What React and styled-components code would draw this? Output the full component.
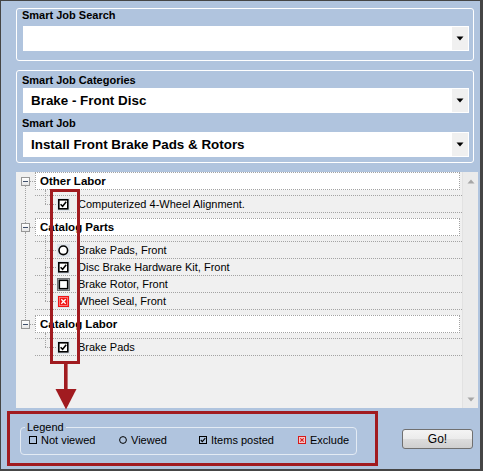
import React from 'react';
import styled, { createGlobalStyle } from 'styled-components';

const GlobalStyle = createGlobalStyle`
  html, body { margin: 0; padding: 0; background: #b0c4de; }
  body { font-family: "Liberation Sans", Arial, sans-serif; color: #000; }
  * { box-sizing: border-box; }
`;

const RED = '#a11b20';
const DOT = '#a3a3a3';

const Window = styled.div`
  position: relative;
  width: 483px;
  height: 471px;
  background: #b0c4de;
  border-style: solid;
  border-color: #454545;
  border-width: 1px 3px 2px 1px;
  padding: 7px 0 0 15px;
  display: flex;
  flex-direction: column;
`;

const GroupBox = styled.div`
  width: 458px;
  border: 1px solid #ffffff;
  border-radius: 3px;
  padding: ${p => p.$pad};
  margin-bottom: 9px;
  display: flex;
  flex-direction: column;
`;

const GroupLabel = styled.div`
  font-size: 11px;
  line-height: 13px;
  font-weight: bold;
  margin-top: ${p => p.$mt || 0}px;
  margin-left: -1px;
  white-space: nowrap;
`;

const Combo = styled.div`
  height: 25px;
  background: #ffffff;
  margin-top: ${p => p.$mt || 0}px;
  padding: 1px;
  display: flex;
  align-items: stretch;
`;

const ComboValue = styled.div`
  flex: 1;
  display: flex;
  align-items: center;
  padding-left: 7px;
  font-size: 13.4px;
  font-weight: bold;
  white-space: nowrap;
`;

const DropButton = styled.div`
  width: 16px;
  background: #f0f0f0;
  display: flex;
  align-items: center;
  justify-content: center;
`;

const TreePanel = styled.div`
  width: 462px;
  height: 236px;
  background: #f0f0f0;
  display: flex;
`;

const TreeBody = styled.div`
  flex: 1;
  display: flex;
  flex-direction: column;
`;

const ScrollBar = styled.div`
  width: 16px;
  background: #ebebeb;
  border-left: 1px solid #e2e2e2;
  display: flex;
  flex-direction: column;
  justify-content: space-between;
  align-items: center;
  padding: 7px 0 6px;
`;

const Node = styled.div`
  position: relative;
  &::before {
    content: '';
    display: ${p => (p.$last ? 'none' : 'block')};
    position: absolute;
    left: 9px;
    top: 14px;
    bottom: -5px;
    border-left: 1px dotted ${DOT};
  }
`;

const HeaderRow = styled.div`
  height: 18px;
  display: flex;
`;

const ExpanderCell = styled.div`
  width: 19px;
  display: flex;
  align-items: center;
  padding-left: 5px;
  position: relative;
  &::after {
    content: '';
    position: absolute;
    left: 14px;
    right: 0;
    top: 9px;
    border-top: 1px dotted ${DOT};
  }
`;

const Expander = styled.div`
  width: 9px;
  height: 9px;
  border: 1px solid #969696;
  background: linear-gradient(#ffffff, #e6e6e6);
  display: flex;
  align-items: center;
  justify-content: center;
  &::before {
    content: '';
    width: 5px;
    height: 1px;
    background: #3f4f6b;
  }
`;

const HeaderBox = styled.div`
  flex: 1;
  margin-right: 2px;
  background: #ffffff;
  border: 1px dotted ${DOT};
  display: flex;
  align-items: center;
  padding-left: 4px;
  font-size: 11.5px;
  font-weight: bold;
  white-space: nowrap;
`;

const ChildList = styled.div`
  position: relative;
  margin: 5px 0 5px 19px;
  &::before {
    content: '';
    position: absolute;
    left: 10px;
    top: -5px;
    bottom: 9px;
    border-left: 1px dotted ${DOT};
  }
`;

const ChildRow = styled.div`
  position: relative;
  height: ${p => (p.$last ? 18 : 17)}px;
  border-top: 1px dotted ${DOT};
  border-bottom: ${p => (p.$last ? `1px dotted ${DOT}` : 'none')};
  display: flex;
  align-items: center;
  padding-left: 22px;
  &::after {
    content: '';
    position: absolute;
    left: 10px;
    width: 11px;
    top: 50%;
    border-top: 1px dotted ${DOT};
  }
`;

const ChildText = styled.span`
  margin-left: 8px;
  font-size: 11px;
  white-space: nowrap;
`;

const BottomBar = styled.div`
  width: 464px;
  height: 61px;
  display: flex;
  justify-content: space-between;
  align-items: flex-start;
  padding: 0 7px 0 4px;
`;

const LegendBox = styled.fieldset`
  width: 337px;
  height: 35px;
  margin: 12px 0 0 0;
  padding: 0 0 0 4px;
  border: 1px solid #e3ebf4;
  border-radius: 4px;
`;

const LegendTitle = styled.legend`
  padding: 0 2px;
  font-size: 11px;
  line-height: 14px;
`;

const LegendItems = styled.div`
  height: 20px;
  margin-top: -4px;
  margin-left: 4px;
  display: grid;
  grid-template-columns: 90px 80px 99px auto;
  align-items: center;
`;

const LegendItem = styled.div`
  display: flex;
  align-items: center;
  gap: 4px;
  font-size: 11px;
  white-space: nowrap;
`;

const GoButton = styled.button`
  margin-top: 21px;
  width: 71px;
  height: 20px;
  border: 1px solid #707070;
  border-radius: 3px;
  background: linear-gradient(#f4f4f4 0%, #ebebeb 50%, #dddddd 51%, #cfcfcf 100%);
  font-family: "Liberation Sans", Arial, sans-serif;
  font-size: 12px;
  color: #000;
  padding: 0;
`;

const Highlight = styled.div`
  position: absolute;
  left: ${p => p.$x}px;
  top: ${p => p.$y}px;
  width: ${p => p.$w}px;
  height: ${p => p.$h}px;
  border: 3px solid ${RED};
  pointer-events: none;
`;

const ArrowWrap = styled.svg`
  position: absolute;
  left: 54px;
  top: 362px;
`;

const DownArrow = () => (
  <svg width="8" height="5" viewBox="0 0 8 5">
    <path d="M0.5 0.5 H7.5 L4 4.5 Z" fill="#000" />
  </svg>
);

const ScrollArrow = ({ up }) => (
  <svg width="8" height="5" viewBox="0 0 8 5">
    <path d={up ? 'M0.5 4.5 H7.5 L4 0.5 Z' : 'M0.5 0.5 H7.5 L4 4.5 Z'} fill="#a6a6a6" />
  </svg>
);

const TreeIcon = ({ kind }) => (
  <svg width="13" height="13" viewBox="0 0 13 13">
    <rect x="0" y="0" width="13" height="13" fill="#dfe4ea" />
    {kind === 'check' && (
      <>
        <rect x="1.8" y="1.8" width="9" height="9" fill="#fff" stroke="#000" strokeWidth="1.6" />
        <path d="M3.6 6.2 L5.6 8.3 L9.2 3.8" stroke="#000" strokeWidth="1.5" fill="none" />
      </>
    )}
    {kind === 'circle' && (
      <circle cx="6.3" cy="6.3" r="4.3" fill="#fff" stroke="#000" strokeWidth="1.6" />
    )}
    {kind === 'empty' && (
      <>
        <rect x="0.5" y="0.5" width="12" height="12" fill="none" stroke="#000" strokeWidth="1" strokeDasharray="1 1" />
        <rect x="2.3" y="2.3" width="8.4" height="8.4" fill="#fff" stroke="#000" strokeWidth="1.6" />
      </>
    )}
    {kind === 'exclude' && (
      <>
        <rect x="1" y="1" width="11" height="11" fill="#f01414" />
        <rect x="2.5" y="2.5" width="8" height="8" fill="none" stroke="#ff8a8a" strokeWidth="0.8" />
        <path d="M4.3 4.3 L8.7 8.7 M8.7 4.3 L4.3 8.7" stroke="#fff" strokeWidth="1.3" />
      </>
    )}
  </svg>
);

const LegendIcon = ({ kind }) => (
  <svg width="8" height="8" viewBox="0 0 8 8">
    {kind === 'empty' && <rect x="0.5" y="0.5" width="7" height="7" fill="none" stroke="#000" />}
    {kind === 'circle' && <circle cx="4" cy="4" r="3.4" fill="none" stroke="#000" />}
    {kind === 'check' && (
      <>
        <rect x="0.5" y="0.5" width="7" height="7" fill="none" stroke="#000" />
        <path d="M1.8 4 L3.3 5.6 L6.3 2.2" stroke="#000" strokeWidth="1.1" fill="none" />
      </>
    )}
    {kind === 'exclude' && (
      <>
        <rect x="0.5" y="0.5" width="7" height="7" fill="#f6c6c6" stroke="#d61a1a" />
        <path d="M2.3 2.3 L5.7 5.7 M5.7 2.3 L2.3 5.7" stroke="#d61a1a" strokeWidth="1.1" />
      </>
    )}
  </svg>
);

const tree = [
  { title: 'Other Labor', items: [{ icon: 'check', label: 'Computerized 4-Wheel Alignment.' }] },
  {
    title: 'Catalog Parts',
    items: [
      { icon: 'circle', label: 'Brake Pads, Front' },
      { icon: 'check', label: 'Disc Brake Hardware Kit, Front' },
      { icon: 'empty', label: 'Brake Rotor, Front' },
      { icon: 'exclude', label: 'Wheel Seal, Front' },
    ],
  },
  { title: 'Catalog Labor', items: [{ icon: 'check', label: 'Brake Pads' }] },
];

const legend = [
  { icon: 'empty', label: 'Not viewed' },
  { icon: 'circle', label: 'Viewed' },
  { icon: 'check', label: 'Items posted' },
  { icon: 'exclude', label: 'Exclude' },
];

export default function App() {
  return (
    <>
      <GlobalStyle />
      <Window>
        <GroupBox $pad="0 4px 9px 6px">
          <GroupLabel>Smart Job Search</GroupLabel>
          <Combo $mt={4}>
            <ComboValue />
            <DropButton><DownArrow /></DropButton>
          </Combo>
        </GroupBox>

        <GroupBox $pad="3px 4px 5px 6px">
          <GroupLabel>Smart Job Categories</GroupLabel>
          <Combo $mt={1}>
            <ComboValue>Brake - Front Disc</ComboValue>
            <DropButton><DownArrow /></DropButton>
          </Combo>
          <GroupLabel $mt={4}>Smart Job</GroupLabel>
          <Combo $mt={2}>
            <ComboValue>Install Front Brake Pads &amp; Rotors</ComboValue>
            <DropButton><DownArrow /></DropButton>
          </Combo>
        </GroupBox>

        <TreePanel>
          <TreeBody>
            {tree.map((node, i) => (
              <Node key={node.title} $last={i === tree.length - 1}>
                <HeaderRow>
                  <ExpanderCell><Expander /></ExpanderCell>
                  <HeaderBox>{node.title}</HeaderBox>
                </HeaderRow>
                <ChildList>
                  {node.items.map((it, j) => (
                    <ChildRow key={it.label} $last={j === node.items.length - 1}>
                      <TreeIcon kind={it.icon} />
                      <ChildText>{it.label}</ChildText>
                    </ChildRow>
                  ))}
                </ChildList>
              </Node>
            ))}
          </TreeBody>
          <ScrollBar>
            <ScrollArrow up />
            <ScrollArrow />
          </ScrollBar>
        </TreePanel>

        <BottomBar>
          <LegendBox>
            <LegendTitle>Legend</LegendTitle>
            <LegendItems>
              {legend.map(l => (
                <LegendItem key={l.label}>
                  <LegendIcon kind={l.icon} />
                  <span>{l.label}</span>
                </LegendItem>
              ))}
            </LegendItems>
          </LegendBox>
          <GoButton>Go!</GoButton>
        </BottomBar>

        <Highlight $x={49} $y={188} $w={30} $h={175} />
        <ArrowWrap width="22" height="47" viewBox="0 0 22 47">
          <rect x="9" y="0" width="3.6" height="28" fill={RED} />
          <path d="M0.5 26 H21.5 L11 46.5 Z" fill={RED} />
        </ArrowWrap>
        <Highlight $x={6} $y={410} $w={371} $h={55} />
      </Window>
    </>
  );
}
